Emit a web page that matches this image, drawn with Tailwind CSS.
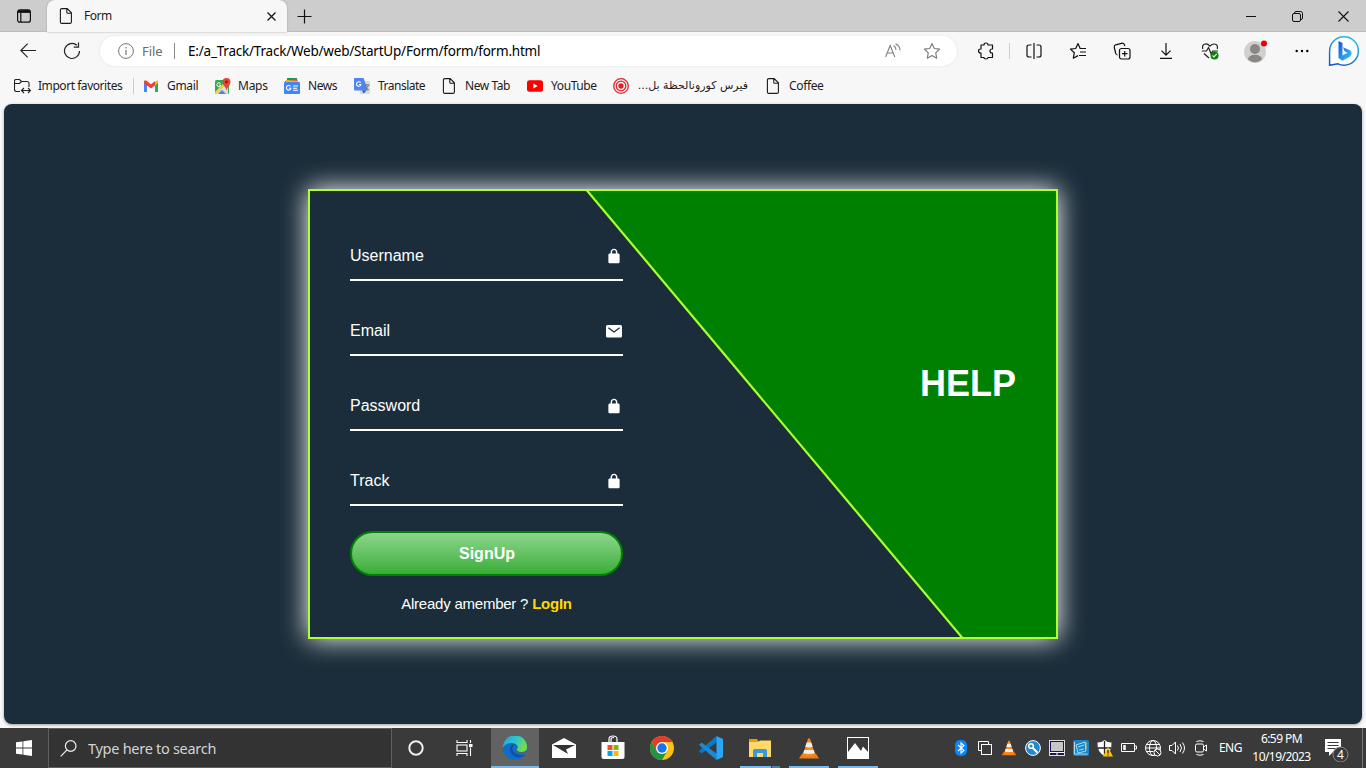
<!DOCTYPE html>
<html lang="en">
<head>
<meta charset="utf-8">
<title>Form</title>
<script src="https://cdn.jsdelivr.net/npm/@tailwindcss/browser@4"></script>
</head>
<body class="w-[1366px] h-[768px] overflow-hidden flex flex-col bg-[#f7f7f7] font-['Noto_Sans','Open_Sans',sans-serif] text-[12px] text-[#1b1b1b]">
<svg width="0" height="0" class="absolute">
  <defs>
    <symbol id="file" viewBox="0 0 16 16"><path d="M3.8.6h5.400l4.200 4.200v9.200c0 .8-.6 1.400-1.400 1.400H3.800c-.8 0-1.400-.6-1.400-1.400V2c0-.8.6-1.400 1.400-1.400zM8.800.8v3.400c0 .6.4 1 1 1h3.400" fill="none" stroke="currentColor" stroke-width="1.100"/></symbol>
    <symbol id="lock" viewBox="0 0 512 512"><path d="M376 186h-24v-40.700c0-52.700-42-96.500-94.700-97.300-53.400-.7-97.300 42.800-97.300 96v42h-24c-22 0-40 18-40 40v198c0 22 18 40 40 40h240c22 0 40-18 40-40V226c0-22-18-40-40-40zm-66 0H202v-42c0-33 24-56 54-56s54 23 54 56v42z" fill="#fff"/></symbol>
    <symbol id="vlc" viewBox="0 0 24 24"><path d="M4.500 17.500h15L23 23H1z" fill="#f57c0a"/><path d="M11 1h2l6 18.500q-7 2.500-14 0z" fill="#f58a1f"/><path d="M9.500 5.500h5l1.500 4.700q-4 1.400-8 0zM6.800 13.500h10.400l1.200 3.700q-6.400 1.800-12.800 0z" fill="#eee"/></symbol>
  </defs>
</svg>

<!-- Tab strip -->
<header class="h-8 shrink-0 bg-[#cdcdcd] flex items-stretch shadow-[inset_0_-1px_0_#bdbdbd]">
  <div class="w-[47px] flex items-center justify-center">
    <svg width="16" height="16" viewBox="0 0 16 16" fill="none" stroke="#111"><rect x="1.600" y="1.800" width="12.800" height="12.400" rx="2.300" stroke-width="1.200"/><path d="M2 3.500h12" stroke-width="2.800"/><path d="M4.800 5v9" stroke-width="1.200"/></svg>
  </div>
  <div class="w-[240px] bg-[#f7f7f7] rounded-t-lg flex items-center pl-[11px] pr-[9px] shadow-[0_0_2px_#999]">
    <svg width="16" height="16"><use href="#file"/></svg>
    <span class="ml-[10px] tracking-[-0.500px]">Form</span>
    <svg class="ml-auto" width="13" height="13" viewBox="0 0 13 13" stroke="#111" stroke-width="1.200"><path d="M2.500 2.500l8 8m0-8l-8 8"/></svg>
  </div>
  <div class="w-[35px] flex items-center justify-center"><svg width="15" height="15" viewBox="0 0 15 15" stroke="#111" stroke-width="1.200"><path d="M7.500 .5v14M.5 7.500h14"/></svg></div>
  <div class="ml-auto flex">
    <div class="w-[46px] flex items-center justify-center"><svg width="10" height="10" viewBox="0 0 10 10" stroke="#111"><path d="M0 5.500h10"/></svg></div>
    <div class="w-[46px] flex items-center justify-center"><svg width="11" height="11" viewBox="0 0 11 11" fill="none" stroke="#111"><rect x=".5" y="2.500" width="8" height="8" rx="1.500"/><path d="M2.500 2.500V2Q2.700.5 4 .5h4.500q2 0 2 2V7q0 1.300-1.500 1.500"/></svg></div>
    <div class="w-[46px] flex items-center justify-center"><svg width="11" height="11" viewBox="0 0 11 11" stroke="#111" stroke-width="1.100"><path d="M.5.500l10 10m0-10l-10 10"/></svg></div>
  </div>
</header>

<!-- Toolbar -->
<div class="h-[38px] shrink-0 flex items-center">
  <div class="w-[56px] flex justify-center"><svg width="16" height="16" viewBox="0 0 16 16" fill="none" stroke="#222" stroke-width="1.100"><path d="M16 7.500H.8M7.700.700L.800 7.500l6.900 6.900"/></svg></div>
  <div class="w-[32px] flex justify-center"><svg width="18" height="18" viewBox="0 0 18 18" fill="none" stroke="#222" stroke-width="1.200"><path d="M16.500 9a7.500 7.500 0 1 1-2.600-5.700M15.500.500v4.700h-4.700"/></svg></div>
  <div class="ml-[12px] w-[857px] h-[30px] rounded-full bg-white shadow-[0_0_3px_#e2e2e2] flex items-center pl-[18px]">
    <svg width="16" height="16" viewBox="0 0 16 16" fill="none" stroke="#777"><circle cx="8" cy="8" r="7.400"/><path d="M8 7v5M8 4v1.500" stroke-width="1.200"/></svg>
    <span class="ml-2 w-[31px] pt-px text-[13px] text-[#6c6c6c] tracking-[-0.100px] whitespace-nowrap">File</span>
    <span class="w-px h-4 bg-[#8a8a8a] ml-[1px]"></span>
    <span class="ml-[13px] pt-px text-[13.500px] tracking-[-0.210px] whitespace-nowrap text-black">E:/a_Track/Track/Web/web/StartUp/Form/form/form.html</span>
    <svg class="ml-auto" width="16" height="16" viewBox="0 0 16 16" fill="none" stroke="#808080" stroke-width="1.100"><path d="M.6 14L5.200 2.500 9.800 14M2.300 10h5.900M8.500 2.500q2.500 1.500 2.500 4.500M10.500.700q4.500 2.300 4.500 6.500"/></svg>
    <svg class="ml-[22px] mr-[16px]" width="18" height="18" viewBox="0 0 18 18" fill="none" stroke="#777" stroke-width="1.100" stroke-linejoin="round"><path d="M9 1.500l2.300 5 5.300.600-3.900 3.700 1 5.400L9 13.500l-4.700 2.700 1-5.400-3.900-3.700 5.300-.6z"/></svg>
  </div>
  <div class="ml-[6px] w-[45px] flex justify-center"><svg width="18" height="18" viewBox="0 0 18 18" fill="none" stroke="#111" stroke-width="1.200" stroke-linejoin="round"><path d="M4 3h3q0-2 2-2t2 2h4.500v4H15a2 2 0 0 0 0 4h.5v4.500H11q0 1.500-2 1.500t-2-1.500H4V11q-2.500 0-2.500-2T4 7z"/></svg></div>
  <span class="ml-px w-px h-4 bg-[#d0d0d0]"></span>
  <div class="w-[47px] flex justify-center"><svg width="18" height="16" viewBox="0 0 18 16" fill="none" stroke="#111" stroke-width="1.200"><path d="M9 0v16M6.500 2H4Q2 2 2 4v8q0 2 2 2h2.500M11.500 2H14q2 0 2 2v8q0 2-2 2h-2.500"/></svg></div>
  <div class="-ml-px w-[43px] flex justify-center"><svg width="18" height="18" viewBox="0 0 18 18" fill="none" stroke="#111" stroke-width="1.200" stroke-linejoin="round"><path d="M17 6.500h-5.800L9 1.500l-2.300 5-5.300.600 3.900 3.700-1 5.400L9 13.600M11 10h6M10 13.500h7"/></svg></div>
  <div class="w-[45px] flex justify-center"><svg width="18" height="18" viewBox="0 0 18 18" fill="none" stroke="#111" stroke-width="1.200"><rect x="6.500" y="6.500" width="10.500" height="10.500" rx="2"/><path d="M11.700 9v5.500M9 11.700h5.500M4.500 13Q3 13 2.600 11L1.300 5.500q-.4-2 1.500-2.700L8.500 1.300q2-.5 3 1.500l.3 1.200"/></svg></div>
  <div class="w-[43px] flex justify-center"><svg width="14" height="16" viewBox="0 0 14 16" fill="none" stroke="#111" stroke-width="1.200"><path d="M7 0v12M2.500 7.700L7 12.200l4.500-4.500M1 15.400h12"/></svg></div>
  <div class="w-[45px] flex justify-center"><svg width="18" height="18" viewBox="0 0 18 18" fill="none" stroke="#222" stroke-width="1.200"><path d="M1.800 7Q.8 3.500 3.500 2.300T9 4.200q2.800-3 5.500-1.900T16.200 7M.8 9h4.700l2-3.500 2.500 6L11.800 9H17M3 11.500l5 4.500"/><circle cx="13.500" cy="13.500" r="4" fill="#107c10" stroke="none"/><path d="M11.500 13.500l1.500 1.400 2.800-3" stroke="#d8ffd8"/></svg></div>
  <div class="w-[48px] flex justify-center"><svg width="26" height="26" viewBox="0 0 26 26"><circle cx="12" cy="14" r="11" fill="#d2d0ce"/><circle cx="12" cy="11" r="5" fill="#8a8886"/><path d="M5 21.500a7 4.800 0 0 1 14 0Q12 27 5 21.500z" fill="#8a8886"/><circle cx="21" cy="5.500" r="3" fill="#e60000"/></svg></div>
  <div class="w-[44px] flex justify-center"><svg width="14" height="4" viewBox="0 0 14 4"><circle cx="1.700" cy="2" r="1.200"/><circle cx="7" cy="2" r="1.200"/><circle cx="12.300" cy="2" r="1.200"/></svg></div>
  <div class="w-[40px] flex justify-center"><svg width="32" height="32" viewBox="0 0 32 32"><defs><linearGradient id="bb" x1="0" y1="1" x2=".5" y2="0"><stop stop-color="#1b4fc4"/><stop offset="1" stop-color="#25b5ee"/></linearGradient><linearGradient id="bi" x1="0" y1="0" x2="1" y2="1"><stop stop-color="#174ae4"/><stop offset=".4" stop-color="#2780ee"/><stop offset="1" stop-color="#35cdf2"/></linearGradient></defs><path d="M1.600 30.200V16A14.400 14.200 0 1 1 16 30.200q-3.500 0-6-1.400-4 1-8.400 1.400z" fill="#fff" stroke="url(#bb)" stroke-width="1.500"/><path d="M10.500 6l4 2v12.500l5-2.700-3-1.500-1.500-4 7 3q2 1.200 1.500 4-.5 2-2.500 3l-6.500 3.500-4-2.800z" fill="url(#bi)"/></svg></div>
</div>

<!-- Favorites bar -->
<nav class="h-[34px] shrink-0 flex items-center pl-[14px] pb-[2px] whitespace-nowrap">
  <div class="w-[119px] flex items-center gap-2"><svg width="17" height="16" viewBox="0 0 17 16" fill="none" stroke="#222" stroke-width="1.100"><path d="M6 13.500H2.500q-2 0-2-2V3q0-1.500 1.500-1.500h3.500L7.500 3.500H13q2 0 2 2V9M.5 5.500h5l2-2M7.500 12.500h9M10 10l-2.500 2.500L10 15M14 10l2.500 2.500L14 15"/></svg><span class="-ml-px tracking-[-0.450px]">Import favorites</span></div>
  <span class="w-px h-4 bg-[#ccc]"></span>
  <div class="ml-[9px] w-[72px] flex items-center gap-2"><svg width="16" height="16" viewBox="0 0 16 16"><path d="M1 4v10h3V7z" fill="#4285f4"/><path d="M15 4v10h-3V7z" fill="#34a853"/><path d="M12 4l3-2v3l-3 2.500z" fill="#fbbc04"/><path d="M1 3.500Q2 1.500 3.800 3L8 6.200 12.200 3 12 7.500 8 10.500 4 7.500 1 5.200z" fill="#ea4335"/></svg><span class="tracking-[-0.350px]">Gmail</span></div>
  <div class="w-[69px] flex items-center gap-[7px]"><svg width="16" height="16" viewBox="0 0 16 16"><rect x="0" y="2" width="14" height="14" rx="1.500" fill="#34a853"/><path d="M1 16L13 4v11q0 1-1 1z" fill="#ddd"/><path d="M0 14L9 5l1.500 1.500L1.500 16Q0 16 0 14z" fill="#fbcf3f"/><path d="M3 16l4-4 4 4z" fill="#4285f4"/><path d="M11.500 0q4 0 4 4 0 2.500-2 4.500-1.500 1.500-2 4-.5-2.500-2-4-2-2-2-4.500 0-4 4-4z" fill="#ea4335"/><circle cx="11.500" cy="4" r="1.400" fill="#8e1d16"/><path d="M5.500 5.500A2 2 0 1 0 5.500 8V7H4" fill="none" stroke="#fff"/></svg><span class="tracking-[-0.250px]">Maps</span></div>
  <div class="w-[70px] flex items-center gap-2"><svg width="16" height="16" viewBox="0 0 16 16"><path d="M3 0h10v6H3z" fill="#0f9d58"/><path d="M1 3l12-2.500 1 5H1z" fill="#ea4335"/><path d="M2 2l12 1v4H2z" fill="#fbbc04"/><rect y="4" width="16" height="12" rx="1" fill="#4285f4"/><path d="M6.500 8.300a2.300 2.300 0 1 0 .5 1.900H5M9 8h5M9 10.200h4M9 12.300h5" fill="none" stroke="#fff" stroke-width="1.100"/></svg><span class="tracking-[-0.450px]">News</span></div>
  <div class="w-[87px] flex items-center gap-2"><svg width="16" height="16" viewBox="0 0 16 16"><rect x="6" y="3" width="10" height="13" rx="1" fill="#dadada"/><path d="M1 0h8.500L14 12.500H1q-1 0-1-1V1q0-1 1-1z" fill="#4c86ee"/><path d="M8 12.500h4.500L9.500 15.500z" fill="#2457b8"/><path d="M6.600 4.800a2.200 2.200 0 1 0 .3 1.700H5" fill="none" stroke="#fff" stroke-width="1.100"/><path d="M10.500 7h5M13 6v1M14.500 7q-1 3-3.500 4.500M11 8q1 2.500 4 4" fill="none" stroke="#777"/></svg><span class="tracking-[-0.500px]">Translate</span></div>
  <div class="w-[86px] flex items-center gap-2"><svg width="16" height="16"><use href="#file"/></svg><span class="tracking-[-0.420px]">New Tab</span></div>
  <div class="w-[86px] flex items-center gap-2"><svg width="16" height="16" viewBox="0 0 16 16"><rect y="2.300" width="16" height="11.400" rx="2.500" fill="#f00"/><path d="M6.400 5.500v5l4.200-2.500z" fill="#fff"/></svg><span class="tracking-[-0.400px]">YouTube</span></div>
  <div class="w-[152px] flex items-center gap-[7px]"><svg width="16" height="16" viewBox="0 0 16 16" fill="none" stroke="#e0202b" stroke-width="1.300"><circle cx="8" cy="8" r="7.300"/><circle cx="8" cy="8" r="4.800"/><circle cx="8" cy="8" r="2" fill="#e0202b"/></svg><span dir="rtl" lang="ar" class="w-[112px] text-[11px] pt-px font-['DejaVu_Sans',sans-serif]">فيرس كورونالحظة بل...</span></div>
  <div class="flex items-center gap-2"><svg width="16" height="16"><use href="#file"/></svg><span class="tracking-[-0.350px]">Coffee</span></div>
</nav>

<!-- Page -->
<main class="mx-1 h-[620px] shrink-0 rounded-lg bg-[#1b2d3a] shadow-[0_1px_3px_#999] pt-[85px] font-['Liberation_Sans',Arial,sans-serif] text-white">
  <section class="relative mx-auto w-[750px] h-[450px] border-2 border-[#adff2f] bg-[#1b2d3a] shadow-[0_0_25px_#fff] flex items-center">
    <svg class="absolute inset-0" width="746" height="446" viewBox="0 0 746 446"><path d="M276-2L653.300 448h95V-2z" fill="#008000"/><path d="M275.700-2L653.300 448" stroke="#adff2f" stroke-width="2.200"/></svg>
    <form class="relative w-[353px] h-full px-10 pt-[40px] text-[16px]">
      <div class="h-[50px] border-b-2 border-white flex items-center justify-between"><label class="pt-[2px]">Username</label><svg width="18" height="18" class="mt-[2px]"><use href="#lock"/></svg></div>
      <div class="mt-[25px] h-[50px] border-b-2 border-white flex items-center justify-between"><label class="pt-[2px]">Email</label><svg width="18" height="18" viewBox="0 0 18 18" class="mt-[2px]"><rect x="1" y="3" width="16" height="12.500" rx="1.500" fill="#fff"/><path d="M3.300 5.800L9 10l5.700-4.200" fill="none" stroke="#1b2d3a" stroke-width="1.200"/></svg></div>
      <div class="mt-[25px] h-[50px] border-b-2 border-white flex items-center justify-between"><label class="pt-[2px]">Password</label><svg width="18" height="18" class="mt-[2px]"><use href="#lock"/></svg></div>
      <div class="mt-[25px] h-[50px] border-b-2 border-white flex items-center justify-between"><label class="pt-[2px]">Track</label><svg width="18" height="18" class="mt-[2px]"><use href="#lock"/></svg></div>
      <button type="button" class="mt-[25px] block w-full h-[45px] rounded-full border-2 border-[#008000] bg-linear-to-b from-[#8bd68b] to-[#36ad36] font-bold text-[16px] pl-px">SignUp</button>
      <p class="mt-[19px] text-center text-[15px] leading-[18px] tracking-[-0.230px]">Already amember ? <a class="font-bold text-[#ffd700]">LogIn</a></p>
    </form>
    <h1 class="relative ml-auto mr-[40px] -mt-[61px] text-[36px] leading-[40px] font-bold">HELP</h1>
  </section>
</main>

<!-- Taskbar -->
<footer class="mt-1 h-10 shrink-0 bg-[#3a3a3a] flex items-stretch text-white">
  <div class="w-12 flex items-center justify-center"><svg width="16" height="16" viewBox="0 0 16 16" fill="#fff"><path d="M0 2.300l6.500-.900v6.200H0zM7.300 1.300L16 0v7.600H7.300zM0 8.400h6.500v6.200L0 13.700zM7.300 8.400H16V16l-8.700-1.300z"/></svg></div>
  <div class="w-[344px] border border-[#606060] bg-[#333] flex items-center pl-[11px]">
    <svg width="17" height="17" viewBox="0 0 17 17" fill="none" stroke="#eee" stroke-width="1.200"><circle cx="10.700" cy="6" r="5.300"/><path d="M7 9.900L.700 16.300"/></svg>
    <span class="ml-[11px] pt-px text-[14.500px] tracking-[-0.280px] text-[#d4d4d4]">Type here to search</span>
  </div>
  <div class="w-12 flex items-center justify-center"><svg width="16" height="16" viewBox="0 0 16 16" fill="none" stroke="#eee" stroke-width="2"><circle cx="8" cy="8" r="6.700"/></svg></div>
  <div class="w-12 flex items-center justify-center"><svg width="17" height="16" viewBox="0 0 17 16" fill="none" stroke="#fff" stroke-width="1.100"><path d="M1 0v2.500h10V0M1 16v-2.500h10V16M14.500 0v3M14.500 7.500V16"/><rect x="1" y="5" width="10" height="6"/><path d="M13 5.500h3.500" stroke-width="3"/></svg></div>
  <div class="ml-[3px] flex gap-px">
    <div class="w-12 bg-[#626262] border-b-2 border-[#76b9ed] flex items-center justify-center pt-[2px]">
      <svg width="24" height="24" viewBox="0 0 24 24"><defs><linearGradient id="e1" x1="0" y1="0" x2="1" y2=".5"><stop stop-color="#259fdc"/><stop offset=".5" stop-color="#2bc3d2"/><stop offset="1" stop-color="#6ce04c"/></linearGradient></defs><circle cx="12" cy="12" r="12" fill="#0d6fc9"/><path d="M0 11.500A12 12 0 0 1 24 11q.3 5-5.500 5-5 0-4.500-3 1.200-1.300.5-3-1.500-3-6-3-5.500 0-8.500 4.500z" fill="url(#e1)"/><path d="M9 8.500Q4 15 11 20q5 3 10.500-.5l1-.8q-3.500 1-6 .3Q8 17 9.500 11.500 10 9 12.500 8.500z" fill="#154f9e"/><path d="M14 13q-.8 3 4 3.300 3.500 0 5-1.200l-.8 2.100q-4.700 1.300-7.700-.700-2.500-1.500-.5-3.500z" fill="#626262"/></svg>
    </div>
    <div class="w-12 flex items-center justify-center"><svg width="24" height="20" viewBox="0 0 24 20"><path d="M0 6.500L12 0l12 6.500V20H0z" fill="#fff"/><path d="M1 7h22l-9 4.500 2 4.500L1 7z" fill="#333"/></svg></div>
    <div class="w-[47px] flex items-center justify-center"><svg width="24" height="26" viewBox="0 0 24 26"><path d="M8 7V4q0-3 4-3t4 3v3M10 7V4.500q0-2 3-2" fill="none" stroke="#fff" stroke-width="1.200"/><path d="M.5 7h23v15q0 2-2 2h-19q-2 0-2-2z" fill="#fff"/><path d="M6.500 10h5v5h-5z" fill="#f25022"/><path d="M12.500 10h5v5h-5z" fill="#7fba00"/><path d="M6.500 16h5v5h-5z" fill="#00a4ef"/><path d="M12.500 16h5v5h-5z" fill="#ffb900"/></svg></div>
    <div class="w-12 ml-px flex items-center justify-center"><svg width="24" height="24" viewBox="0 0 24 24"><circle cx="12" cy="12" r="12" fill="#fbc116"/><path d="M1.600 6A12 12 0 0 1 22.400 6H12L6.800 15z" fill="#e33b2e"/><path d="M1.600 6A12 12 0 0 0 12 24l5.200-9H6.800z" fill="#229342"/><circle cx="12" cy="12" r="6" fill="#fff"/><circle cx="12" cy="12" r="4.700" fill="#1a73e8"/></svg></div>
    <div class="w-12 flex items-center justify-center"><svg width="24" height="24" viewBox="0 0 24 24"><path d="M17.500 0L0 15l2.500 2.500L18 6z" fill="#0879c4"/><path d="M17.500 24L0 9l2.500-2.500L18 18z" fill="#168bd6"/><path d="M17.500 0L24 3v18l-6.500 3z" fill="#2aa7f4"/></svg></div>
    <div class="w-12 relative flex items-center justify-center"><svg width="22" height="20" viewBox="0 0 22 20"><path d="M0 1h8l2 3H0z" fill="#e5a000"/><path d="M0 4h9l2-1.500h11V19H0z" fill="#ffd969"/><path d="M4 12.500Q4 11 5.500 11h11q1.500 0 1.500 1.500V19h-4v-4H8v4H4z" fill="#3b98db"/></svg><span class="absolute bottom-0 left-[4px] w-[31px] h-[2px] bg-[#76b9ed]"></span><span class="absolute bottom-0 left-[36px] w-[8px] h-[2px] bg-[#5180a5]"></span></div>
    <div class="w-12 relative flex items-center justify-center"><svg width="22" height="23"><use href="#vlc"/></svg><span class="absolute bottom-0 left-[4px] w-10 h-[2px] bg-[#76b9ed]"></span></div>
    <div class="w-12 relative flex items-center justify-center"><svg width="22" height="22" viewBox="0 0 22 22"><rect x=".5" y=".5" width="21" height="21" fill="none" stroke="#fff"/><path d="M1 15l7-9 6 8 2-4.500 5.500 6V21H1z" fill="#fff"/></svg><span class="absolute bottom-0 left-[4px] w-10 h-[2px] bg-[#76b9ed]"></span></div>
  </div>

  <div class="ml-auto flex items-center">
    <div class="w-6 flex justify-center"><svg width="12" height="16" viewBox="0 0 12 16"><rect width="12" height="16" rx="5" fill="#0a84ff"/><path d="M3 5l6 5.500L6 13V3l3 2.500L3 11" fill="none" stroke="#fff" stroke-width="1.100"/></svg></div>
    <div class="w-6 flex justify-center"><svg width="14" height="14" viewBox="0 0 14 14" fill="none" stroke="#fff"><rect x="3.500" y="3.500" width="10" height="10"/><path d="M3.500 9.500h-3v-9h10v3"/></svg></div>
    <div class="w-6 flex justify-center"><svg width="16" height="16"><use href="#vlc"/></svg></div>
    <div class="w-6 flex justify-center"><svg width="16" height="16" viewBox="0 0 16 16" fill="none" stroke="#fff"><circle cx="8" cy="8" r="7.400" fill="#2387ce"/><circle cx="6" cy="6" r="2.300" stroke-width="1.500"/><path d="M7.700 7.700l4.800 5" stroke-width="2"/></svg></div>
    <div class="w-6 flex justify-center"><svg width="16" height="16" viewBox="0 0 16 16"><rect x=".5" y=".5" width="15" height="15" fill="#161660" stroke="#ddd"/><path d="M2 2h12v9H2z" fill="#c6c6c6"/><path d="M1 12.500h14M8 12v3" stroke="#fff"/></svg></div>
    <div class="w-6 flex justify-center"><svg width="16" height="16" viewBox="0 0 16 16"><rect width="16" height="16" rx="2" fill="#1984c8"/><path d="M3 5l9-3 1 9-8 2zM1.500 2v12h13M5 7l6-2M6 10l5-1" fill="none" stroke="#a6dcf4"/><path d="M13 2v7" stroke="#e6ca55"/></svg></div>
    <div class="w-6 flex justify-center"><svg width="16" height="17" viewBox="0 0 16 17"><path d="M7.500 0q3 2.500 7 2.500Q15 12 7.500 16 0 12 .5 2.500 5 2.500 7.500 0z" fill="#fff"/><path d="M7.500 1v14M1 8h13" stroke="#222" stroke-width="1.300"/><path d="M11 7l5 9.500H6z" fill="#ffc20e"/><path d="M11 10v3.500M11 14.500v1" stroke="#222" stroke-width="1.200"/></svg></div>
    <div class="w-6 flex justify-center"><svg width="16" height="10" viewBox="0 0 16 10" fill="none" stroke="#fff"><path d="M.5.500h13v8H.500zM13.500 3h2v3h-2"/><path d="M3.500 2v5" stroke-width="2.500"/></svg></div>
    <div class="w-6 flex justify-center"><svg width="17" height="17" viewBox="0 0 17 17" fill="none" stroke="#fff"><circle cx="8" cy="8" r="7.500"/><ellipse cx="8" cy="8" rx="3.500" ry="7.500"/><path d="M1.500 4.500h13M.5 8h15M1.500 11.500h7"/><circle cx="12.500" cy="12.500" r="3.500" fill="#3a3a3a"/><path d="M10 10l5 5"/></svg></div>
    <div class="w-6 flex justify-center"><svg width="17" height="16" viewBox="0 0 17 16" fill="none" stroke="#fff"><path d="M.5 5.500H3L6.500 2v12L3 10.500H.5zM8.500 5.500q1.800 2.500 0 5M11 4q3 4 0 8M13.500 2.500q4 5.500 0 11"/></svg></div>
    <div class="w-6 flex justify-center"><svg width="14" height="16" viewBox="0 0 14 16" fill="none" stroke="#fff"><rect x="1.500" y="4" width="8" height="8" rx="1.500"/><path d="M9.500 7l3-2v6l-3-2M2.500 1.500Q6 0 9.500 1.500M2.500 14.500q3.500 1.500 7 0"/></svg></div>
    <span class="ml-[6px] w-[24px] tracking-[-0.550px] whitespace-nowrap">ENG</span>
    <div class="ml-[3px] w-[71px] text-center leading-[18px] tracking-[-0.550px] whitespace-nowrap">6:59 PM<br>10/19/2023</div>
    <div class="ml-[8px] w-[37px] h-full relative flex items-center"><svg width="26" height="28" viewBox="0 0 26 28"><path d="M0 5h16v13H8l-4 4v-4H0z" fill="#fff"/><path d="M2.500 8.500h11M2.500 11.500h11M2.500 14.500h8" stroke="#3a3a3a"/><circle cx="15.500" cy="20.500" r="7.500" fill="#3a3a3a" stroke="#8a8a8a"/></svg><span class="absolute left-[12px] top-[18px] text-[12px] leading-[18px]">4</span></div>
    <span class="w-px h-full bg-[#777] mr-[3px]"></span>
  </div>
</footer>
</body>
</html>
